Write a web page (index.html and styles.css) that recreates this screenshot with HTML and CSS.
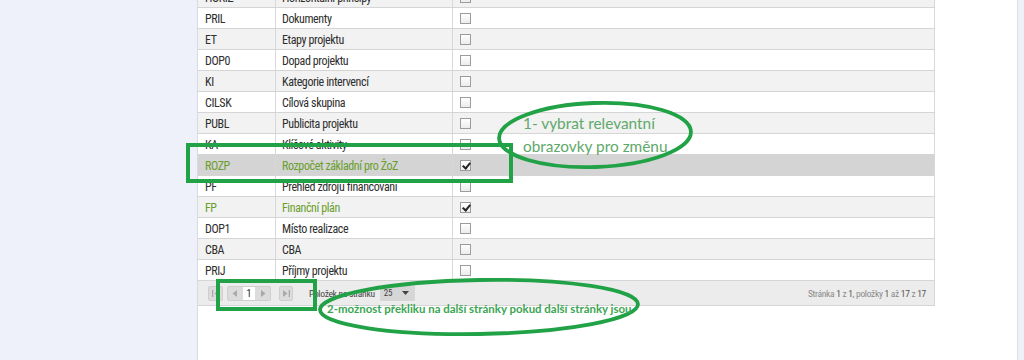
FILE: index.html
```html
<!DOCTYPE html>
<html>
	<head>
		<meta charset="utf-8" />
		<link rel="stylesheet" href="styles.css">
		<title>Obrazovky projektu</title>
	</head>
	<body>
		<div class="page">
			<div class="side"></div>
			<div class="main">
				<div class="grid">
					<div class="row"><div class="c1">HORIZ</div><div class="c2">Horizontální principy</div><div class="c3"><span class="cb"></span></div></div>
					<div class="row"><div class="c1">PRIL</div><div class="c2">Dokumenty</div><div class="c3"><span class="cb"></span></div></div>
					<div class="row"><div class="c1">ET</div><div class="c2">Etapy projektu</div><div class="c3"><span class="cb"></span></div></div>
					<div class="row"><div class="c1">DOP0</div><div class="c2">Dopad projektu</div><div class="c3"><span class="cb"></span></div></div>
					<div class="row"><div class="c1">KI</div><div class="c2">Kategorie intervencí</div><div class="c3"><span class="cb"></span></div></div>
					<div class="row"><div class="c1">CILSK</div><div class="c2">Cílová skupina</div><div class="c3"><span class="cb"></span></div></div>
					<div class="row"><div class="c1">PUBL</div><div class="c2">Publicita projektu</div><div class="c3"><span class="cb"></span></div></div>
					<div class="row"><div class="c1">KA</div><div class="c2">Klíčové aktivity</div><div class="c3"><span class="cb"></span></div></div>
					<div class="row sel on"><div class="c1">ROZP</div><div class="c2">Rozpočet základní pro ŽoZ</div><div class="c3"><span class="cb checked"></span></div></div>
					<div class="row"><div class="c1">PF</div><div class="c2">Přehled zdrojů financování</div><div class="c3"><span class="cb"></span></div></div>
					<div class="row on"><div class="c1">FP</div><div class="c2">Finanční plán</div><div class="c3"><span class="cb checked"></span></div></div>
					<div class="row"><div class="c1">DOP1</div><div class="c2">Místo realizace</div><div class="c3"><span class="cb"></span></div></div>
					<div class="row"><div class="c1">CBA</div><div class="c2">CBA</div><div class="c3"><span class="cb"></span></div></div>
					<div class="row"><div class="c1">PRIJ</div><div class="c2">Příjmy projektu</div><div class="c3"><span class="cb"></span></div></div>

					<div class="pager">
						<span class="pbtn first"><svg width="7" height="7" viewBox="0 0 7 7"><rect x="0" y="0" width="1.3" height="7" fill="#a9a9a9"/><path d="M7 0 L2.5 3.5 L7 7 Z" fill="#a9a9a9"/></svg></span>
						<span class="pgroup">
							<span class="pbtn"><svg width="5" height="7" viewBox="0 0 5 7"><path d="M5 0 L0.5 3.5 L5 7 Z" fill="#a9a9a9"/></svg></span>
							<span class="pnum">1</span>
							<span class="pbtn"><svg width="5" height="7" viewBox="0 0 5 7"><path d="M0 0 L4.5 3.5 L0 7 Z" fill="#a9a9a9"/></svg></span>
						</span>
						<span class="pbtn last"><svg width="7" height="7" viewBox="0 0 7 7"><path d="M0 0 L4.5 3.5 L0 7 Z" fill="#a9a9a9"/><rect x="5.7" y="0" width="1.3" height="7" fill="#a9a9a9"/></svg></span>
						<span class="plabel">Položek na stránku</span>
						<span class="psize">25 <svg width="7" height="4" viewBox="0 0 7 4"><path d="M0 0 L7 0 L3.5 4 Z" fill="#444"/></svg></span>
						<span class="pinfo">Stránka <b>1</b> z <b>1</b>, položky <b>1</b> až <b>17</b> z <b>17</b></span>
					</div>
				</div>
			</div>
			<div class="edge"></div>
		</div>

		<svg class="marks" width="1024" height="360" viewBox="0 0 1024 360">
			<rect x="188" y="145" width="323" height="36" fill="none" stroke="#22a247" stroke-width="4"/>
			<rect x="218" y="281" width="97" height="28" fill="none" stroke="#22a247" stroke-width="4"/>
			<ellipse cx="595" cy="135" rx="96" ry="32" fill="none" stroke="#22a247" stroke-width="3.8" transform="rotate(-2 595 135)"/>
			<ellipse cx="479" cy="307" rx="159" ry="27" fill="none" stroke="#22a247" stroke-width="3.8" transform="rotate(-1 479 307)"/>
		</svg>
		<div class="note note1">1- vybrat relevantní<br />obrazovky pro změnu</div>
		<div class="note note2">2-možnost překliku na další stránky pokud další stránky jsou</div>
	</body>
</html>
```

FILE: styles.css
```css
body,html{
	margin:0;
	padding:0;
	height:100%;
	overflow:hidden;
	background-color:#eef1fa;
	font-family:Roboto,"DejaVu Sans",sans-serif;
}
.page{
	display:flex;
	height:360px;
}
.side{
	width:197px;
	flex:none;
}
.main{
	width:819px;
	flex:none;
	background-color:#fff;
	border-left:1px solid #d7dae2;
	border-right:1px solid #dde0e8;
	overflow:hidden;
}
.edge{
	flex:1;
}
.grid{
	width:737px;
	margin-top:-13px;
}
.row{
	display:grid;
	grid-template-columns:78px 177px 1fr;
	height:21px;
	box-sizing:border-box;
	border-bottom:1px solid #d5d5d5;
	font-size:12px;
	font-stretch:75%;
	letter-spacing:-0.4px;
	color:#2e2e2e;
}
.row:nth-child(odd){
	background-color:#f2f2f2;
}
.row.sel{
	background-color:#d4d4d4;
}
.row.on{
	color:#6a9e2c;
}
.row > div{
	display:flex;
	align-items:center;
	border-right:1px solid #d8d8d8;
	padding-top:1px;
}
.c1{
	padding-left:7px;
}
.c2{
	padding-left:6px;
}
.c3{
	padding-left:7px;
}
.cb{
	display:block;
	width:9px;
	height:9px;
	border:1px solid #9c9c9c;
	background:linear-gradient(#fff,#ececec);
	position:relative;
}
.cb.checked::after{
	content:"";
	position:absolute;
	left:3px;
	top:0px;
	width:3px;
	height:6px;
	border-right:2px solid #222;
	border-bottom:2px solid #222;
	transform:rotate(40deg);
}
.pager{
	display:flex;
	align-items:center;
	height:25px;
	box-sizing:border-box;
	background-color:#ececec;
	border-bottom:1px solid #d5d5d5;
	border-right:1px solid #d8d8d8;
	padding-left:10px;
	font-size:9px;
	font-stretch:80%;
	color:#555;
}
.pbtn{
	display:flex;
	align-items:center;
	justify-content:center;
	width:13px;
	height:15px;
	background-color:#dcdcdc;
	border-radius:2px;
}
.pbtn.first{
	width:15px;
	border:1px solid #cfcfcf;
	box-sizing:border-box;
}
.pgroup{
	display:flex;
	align-items:center;
	margin-left:4px;
	background-color:#dcdcdc;
	border-radius:2px;
	border:1px solid #cfcfcf;
	height:15px;
	box-sizing:border-box;
}
.pgroup .pbtn{
	height:13px;
}
.pnum{
	width:12px;
	height:13px;
	margin:0 2px;
	background-color:#fff;
	font-size:10px;
	color:#222;
	text-align:center;
	line-height:13px;
}
.pbtn.last{
	margin-left:8px;
	width:14px;
	border:1px solid #cfcfcf;
	box-sizing:border-box;
}
.plabel{
	margin-left:16px;
	font-size:9.5px;
	letter-spacing:-0.3px;
	color:#444;
}
.psize{
	display:flex;
	align-items:center;
	justify-content:space-between;
	margin-left:5px;
	width:35px;
	height:15px;
	box-sizing:border-box;
	padding:0 6px 0 4px;
	background-color:#d6d6d6;
	font-size:9px;
	color:#444;
}
.pinfo{
	margin-left:auto;
	padding-right:8px;
	color:#8a8a8a;
	font-size:9.5px;
	letter-spacing:-0.3px;
}
.pinfo b{
	font-weight:normal;
	color:#555;
}
.marks{
	position:absolute;
	left:0;
	top:0;
	pointer-events:none;
}
.note{
	position:absolute;
	font-family:Lato,"Open Sans",sans-serif;
	white-space:nowrap;
}
.note1{
	left:523px;
	top:112px;
	font-size:15.4px;
	line-height:23px;
	color:#5ea96a;
}
.note2{
	left:327px;
	top:302px;
	font-size:11.45px;
	font-weight:bold;
	color:#3aa552;
}
```
